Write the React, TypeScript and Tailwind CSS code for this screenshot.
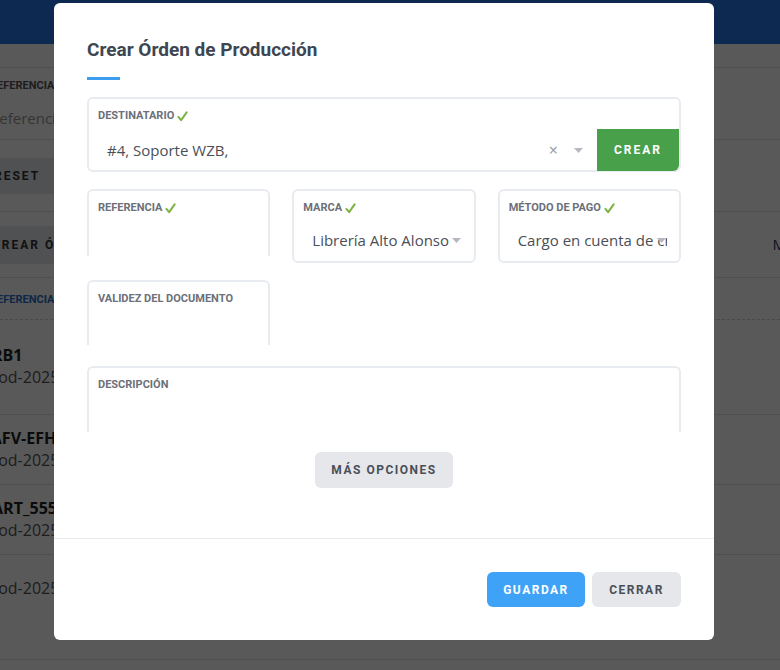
import React from "react"

const labelFont = "font-['Liberation_Sans_Narrow','Roboto',sans-serif]"

function Check() {
 return (
  <svg width="11" height="11" viewBox="0 0 12 12" className="ml-[3px] inline-block">
   <path d="M1.5 6.5 L4.5 10 L10.5 1.5" fill="none" stroke="#7cb342" strokeWidth="2.2" strokeLinecap="round" strokeLinejoin="round" />
  </svg>
 )
}

function Caret() {
 return (
  <svg width="9" height="5" viewBox="0 0 9 5">
   <path d="M0 0 H9 L4.5 5 Z" fill="#b5b9bf" />
  </svg>
 )
}

function Label({ text, ok }: { text: string; ok?: boolean }) {
 return (
  <div className={`flex items-center text-[11px] leading-[14px] font-bold uppercase text-[#6b7079] ${labelFont}`}>
   {text}
   {ok && <Check />}
  </div>
 )
}

type FieldProps = {
 label: string
 ok?: boolean
 value?: string
 select?: boolean
 open?: boolean
 className?: string
}

function Field({ label, ok, value, select, open, className }: FieldProps) {
 return (
  <div
   className={`rounded-md border-2 border-[#e8ebef] bg-white px-[9px] pt-[10px] ${open ? "border-b-0 rounded-b-none" : ""} ${className ?? ""}`}
  >
   <Label text={label} ok={ok} />
   {value && (
    <div className="mt-[15px] flex items-center pl-[9px]">
     <span className="flex-1 overflow-hidden whitespace-nowrap font-['Open_Sans',sans-serif] text-[15px] leading-[20px] text-[#4a4f57]">
      {value}
     </span>
     {select && (
      <span className="-ml-[10px] pr-[4px]">
       <Caret />
      </span>
     )}
    </div>
   )}
  </div>
 )
}

function Background() {
 const row = "border-b border-[#e2e2e2]"
 return (
  <div className="h-[670px] w-[780px] overflow-hidden bg-white font-['Open_Sans',sans-serif]">
   <div className="h-[44px] bg-[#2a76e8]" />
   <div className={`h-[24px] ${row}`} />
   <div className={`h-[72px] ${row} -ml-[10px] pt-[10px]`}>
    <div className={`text-[11px] font-bold text-[#555] ${labelFont}`}>REFERENCIA</div>
    <div className="mt-[12px] text-[15px] text-[#999]">Referencia</div>
   </div>
   <div className={`h-[72px] ${row} flex items-center -ml-[30px]`}>
    <div className={`rounded-md bg-[#e5e7eb] px-[24px] py-[9px] text-[12px] font-bold tracking-[2px] text-[#333] ${labelFont}`}>RESET</div>
   </div>
   <div className={`h-[66px] ${row} flex items-center justify-between`}>
    <div className={`-ml-[28px] rounded-md bg-[#e5e7eb] px-[20px] py-[10px] text-[12px] font-bold tracking-[2px] text-[#333] ${labelFont}`}>CREAR ÓRDEN</div>
    <div className="-mr-[6px] text-[15px] text-[#1f3a5f]">M</div>
   </div>
   <div className="h-[42px] border-b border-dashed border-[#d0d0d0] -ml-[10px] pt-[14px]">
    <div className={`text-[11px] font-bold text-[#2a6fc9] ${labelFont}`}>REFERENCIA</div>
   </div>
   {[
    ["PRB1", "Prod-2025-001", "h-[95px] pt-[24px]"],
    ["SAFV-EFH", "Prod-2025-002", "h-[70px] pt-[12px]"],
    ["PART_555", "Prod-2025-003", "h-[70px] pt-[12px]"],
    ["", "Prod-2025-004", "h-[105px] pt-[22px]"],
   ].map(([code, ref, h]) => (
    <div key={ref} className={`${h} ${row} -ml-[18px]`}>
     {code && <div className="text-[16px] font-bold leading-[22px] text-[#222]">{code}</div>}
     <div className="text-[16px] leading-[22px] text-[#555]">{ref}</div>
    </div>
   ))}
  </div>
 )
}

export default function App() {
 return (
  <div className="relative h-[670px] w-[780px] overflow-hidden">
   <Background />
   <div className="absolute inset-0 bg-black/65">
    <div className="ml-[54px] mt-[3px] w-[660px] rounded-md bg-white">
     <div className="px-[33px] pt-[34px]">
      <h2 className={`text-[19px] leading-[26px] font-bold text-[#3d4651] ${labelFont}`}>Crear Órden de Producción</h2>
      <div className="mt-[14px] h-[3px] w-[33px] bg-[#3b9cf0]" />

      <div className="mt-[17px] h-[75px] rounded-md border-2 border-[#e8ebef]">
       <div className="px-[9px] pt-[10px]">
        <Label text="Destinatario" ok />
       </div>
       <div className="mt-[6px] flex h-[42px] items-center">
        <span className="flex-1 pl-[18px] font-['Open_Sans',sans-serif] text-[15px] text-[#4a4f57]">#4, Soporte WZB,</span>
        <span className="mr-[16px] text-[16px] leading-none text-[#9aa0a6]">×</span>
        <span className="mr-[14px]">
         <Caret />
        </span>
        <button className={`h-[42px] w-[82px] rounded-br-md bg-[#48a04b] text-[12px] font-bold tracking-[2px] text-white ${labelFont}`}>
         CREAR
        </button>
       </div>
      </div>

      <div className="mt-[17px] grid grid-cols-3 gap-x-[22px]">
       <Field label="Referencia" ok open className="h-[67px]" />
       <Field label="Marca" ok value="Librería Alto Alonso" select className="h-[74px]" />
       <Field label="Método de pago" ok value="Cargo en cuenta de crédito" select className="h-[74px]" />
      </div>

      <div className="mt-[17px] grid grid-cols-3 gap-x-[22px]">
       <Field label="Validez del documento" open className="h-[65px]" />
      </div>

      <Field label="Descripción" open className="mt-[21px] h-[66px]" />

      <div className="mt-[20px] flex justify-center">
       <button className={`h-[36px] w-[138px] rounded-md bg-[#e5e7eb] text-[12px] font-bold tracking-[1.5px] text-[#4a4f57] ${labelFont}`}>
        MÁS OPCIONES
       </button>
      </div>
     </div>

     <div className="mt-[50px] border-t border-[#e8ebef]" />

     <div className="flex justify-end gap-[7px] px-[33px] pb-[33px] pt-[33px]">
      <button className={`h-[35px] w-[98px] rounded-md bg-[#3ea2f7] text-[12px] font-bold tracking-[1.5px] text-white ${labelFont}`}>
       GUARDAR
      </button>
      <button className={`h-[35px] w-[89px] rounded-md bg-[#e5e7eb] text-[12px] font-bold tracking-[1.5px] text-[#4a4f57] ${labelFont}`}>
       CERRAR
      </button>
     </div>
    </div>
   </div>
  </div>
 )
}
